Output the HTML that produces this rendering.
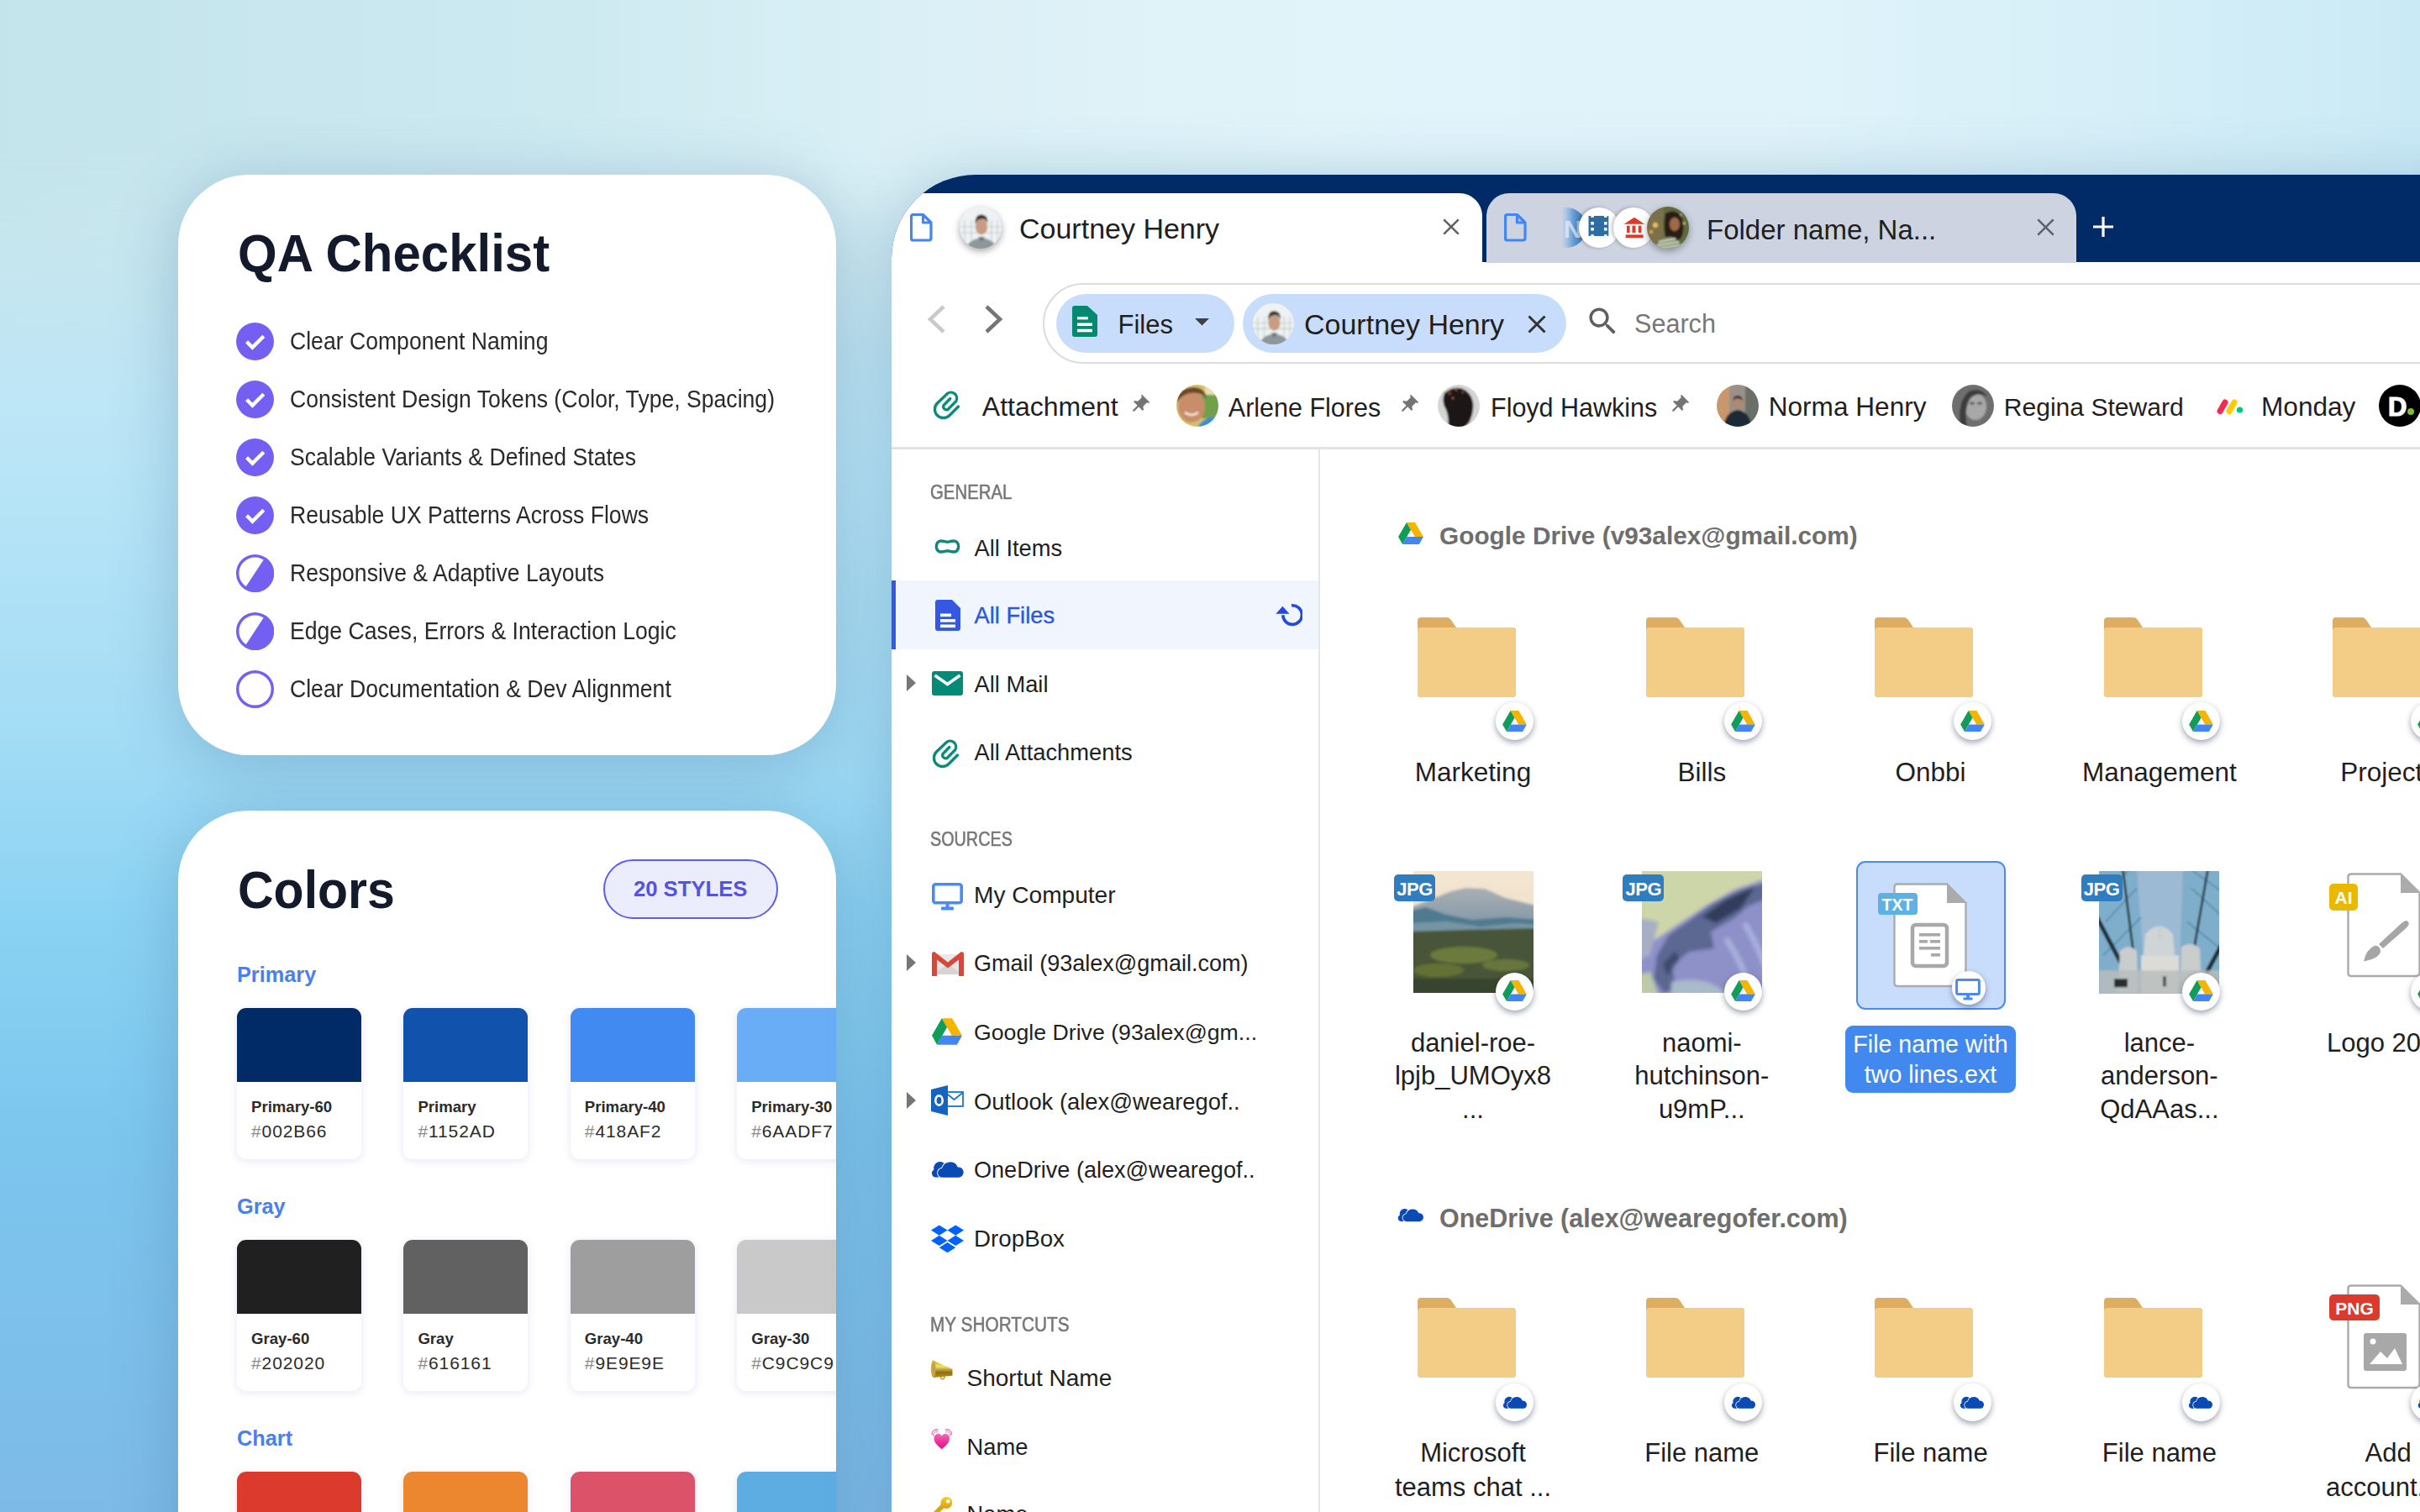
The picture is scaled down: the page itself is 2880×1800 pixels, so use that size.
<!DOCTYPE html>
<html><head><meta charset="utf-8">
<style>
html,body{margin:0;padding:0;}
body{width:2880px;height:1800px;overflow:hidden;position:relative;font-family:"Liberation Sans",sans-serif;}
.t{position:absolute;white-space:nowrap;}
</style></head><body>
<div style="position:absolute;left:0;top:0;width:2880px;height:1800px;background:
linear-gradient(180deg, #C6E5EC 0px, #CAE8F0 250px, #B9E5F7 550px, #A5DDF5 850px, #8AD2F3 1100px, #7CC6EE 1350px, #7DBAE8 1800px);"></div>
<div style="position:absolute;left:0;top:0;width:2880px;height:420px;background:linear-gradient(90deg,#C3E4EB 0px,#CBE9F0 600px,#DBF0F6 1100px,#E1F4FA 1600px,#E0F3FA 2100px,#D6EFF8 2500px,#CAEAF6 2880px);-webkit-mask-image:linear-gradient(180deg,#000 0px,#000 180px,transparent 420px);mask-image:linear-gradient(180deg,#000 0px,#000 180px,transparent 420px);"></div>
<div style="position:absolute;left:212.0px;top:208.0px;width:783.0px;height:691.0px;background:#fff;border-radius:84px;box-shadow:0 12px 70px 6px rgba(70,115,155,0.30);"></div>
<div class="t" style="left:283.0px;top:273.2px;font-size:60px;line-height:60px;color:#131A2B;font-weight:700;transform:scaleY(1.06);transform-origin:0 50.80px;">QA Checklist</div>
<svg style="position:absolute;left:281.0px;top:383.5px;" width="45" height="45" viewBox="0 0 45 45"><circle cx="22.5" cy="22.5" r="22.5" fill="#7360F2"/><path d="M12.6 22.8 L19.4 29.6 L32.8 16.2" fill="none" stroke="#fff" stroke-width="4.3" stroke-linecap="butt" stroke-linejoin="miter"/></svg>
<div class="t" style="left:345.0px;top:393.9px;font-size:26.6px;line-height:26.6px;color:#2A2A2A;font-weight:400;transform:scaleY(1.08);transform-origin:0 22.52px;">Clear Component Naming</div>
<svg style="position:absolute;left:281.0px;top:452.5px;" width="45" height="45" viewBox="0 0 45 45"><circle cx="22.5" cy="22.5" r="22.5" fill="#7360F2"/><path d="M12.6 22.8 L19.4 29.6 L32.8 16.2" fill="none" stroke="#fff" stroke-width="4.3" stroke-linecap="butt" stroke-linejoin="miter"/></svg>
<div class="t" style="left:345.0px;top:462.9px;font-size:26.6px;line-height:26.6px;color:#2A2A2A;font-weight:400;transform:scaleY(1.08);transform-origin:0 22.52px;">Consistent Design Tokens (Color, Type, Spacing)</div>
<svg style="position:absolute;left:281.0px;top:521.5px;" width="45" height="45" viewBox="0 0 45 45"><circle cx="22.5" cy="22.5" r="22.5" fill="#7360F2"/><path d="M12.6 22.8 L19.4 29.6 L32.8 16.2" fill="none" stroke="#fff" stroke-width="4.3" stroke-linecap="butt" stroke-linejoin="miter"/></svg>
<div class="t" style="left:345.0px;top:531.9px;font-size:26.6px;line-height:26.6px;color:#2A2A2A;font-weight:400;transform:scaleY(1.08);transform-origin:0 22.52px;">Scalable Variants &amp; Defined States</div>
<svg style="position:absolute;left:281.0px;top:590.5px;" width="45" height="45" viewBox="0 0 45 45"><circle cx="22.5" cy="22.5" r="22.5" fill="#7360F2"/><path d="M12.6 22.8 L19.4 29.6 L32.8 16.2" fill="none" stroke="#fff" stroke-width="4.3" stroke-linecap="butt" stroke-linejoin="miter"/></svg>
<div class="t" style="left:345.0px;top:600.9px;font-size:26.6px;line-height:26.6px;color:#2A2A2A;font-weight:400;transform:scaleY(1.08);transform-origin:0 22.52px;">Reusable UX Patterns Across Flows</div>
<svg style="position:absolute;left:281.0px;top:659.5px;" width="45" height="45" viewBox="0 0 45 45"><path d="M34.6 3.5 A22.5 22.5 0 1 1 9.9 41.1 Z" fill="#7360F2"/><circle cx="22.5" cy="22.5" r="20.8" fill="none" stroke="#7360F2" stroke-width="3.4"/></svg>
<div class="t" style="left:345.0px;top:669.9px;font-size:26.6px;line-height:26.6px;color:#2A2A2A;font-weight:400;transform:scaleY(1.08);transform-origin:0 22.52px;">Responsive &amp; Adaptive Layouts</div>
<svg style="position:absolute;left:281.0px;top:728.5px;" width="45" height="45" viewBox="0 0 45 45"><path d="M34.6 3.5 A22.5 22.5 0 1 1 9.9 41.1 Z" fill="#7360F2"/><circle cx="22.5" cy="22.5" r="20.8" fill="none" stroke="#7360F2" stroke-width="3.4"/></svg>
<div class="t" style="left:345.0px;top:738.9px;font-size:26.6px;line-height:26.6px;color:#2A2A2A;font-weight:400;transform:scaleY(1.08);transform-origin:0 22.52px;">Edge Cases, Errors &amp; Interaction Logic</div>
<svg style="position:absolute;left:281.0px;top:797.5px;" width="45" height="45" viewBox="0 0 45 45"><circle cx="22.5" cy="22.5" r="20.8" fill="#fff" stroke="#7360F2" stroke-width="3.4"/></svg>
<div class="t" style="left:345.0px;top:807.9px;font-size:26.6px;line-height:26.6px;color:#2A2A2A;font-weight:400;transform:scaleY(1.08);transform-origin:0 22.52px;">Clear Documentation &amp; Dev Alignment</div>
<div style="position:absolute;left:212.0px;top:965.0px;width:783.0px;height:1000.0px;background:#fff;border-radius:84px;box-shadow:0 12px 70px 6px rgba(70,115,155,0.30);"></div>
<div class="t" style="left:283.0px;top:1031.6px;font-size:59px;line-height:59px;color:#131A2B;font-weight:700;transform:scaleY(1.06);transform-origin:0 49.96px;">Colors</div>
<div style="position:absolute;left:718.0px;top:1023.0px;width:207.5px;height:71.0px;box-sizing:border-box;border:2px solid #5B5EE6;background:#ECEDFC;border-radius:36px;"></div>
<div class="t" style="left:721.7px;width:200px;text-align:center;top:1045.7px;font-size:25.7px;line-height:25.7px;color:#5552E0;font-weight:700;">20 STYLES</div>
<div style="position:absolute;left:212px;top:965px;width:783px;height:835px;overflow:hidden;border-radius:84px 84px 0 0;">
<div class="t" style="left:70.0px;top:182.6px;font-size:25.3px;line-height:25.3px;color:#4A7FF2;font-weight:700;">Primary</div>
<div style="position:absolute;left:70.0px;top:235.0px;width:148.0px;height:180.0px;background:#fff;border-radius:11px;box-shadow:0 2px 8px 1px rgba(90,100,200,0.13);overflow:hidden;"></div>
<div style="position:absolute;left:70.0px;top:235.0px;width:148.0px;height:88.0px;background:#002B66;border-radius:11px 11px 0 0;"></div>
<div class="t" style="left:87.0px;top:343.9px;font-size:18.6px;line-height:18.6px;color:#2B2B2B;font-weight:700;">Primary-60</div>
<div class="t" style="left:87.0px;top:371.2px;font-size:21px;line-height:21px;color:#2B2B2B;font-weight:400;letter-spacing:0.9px;"><span style="color:#8A8A8A">#</span>002B66</div>
<div style="position:absolute;left:268.4px;top:235.0px;width:148.0px;height:180.0px;background:#fff;border-radius:11px;box-shadow:0 2px 8px 1px rgba(90,100,200,0.13);overflow:hidden;"></div>
<div style="position:absolute;left:268.4px;top:235.0px;width:148.0px;height:88.0px;background:#1152AD;border-radius:11px 11px 0 0;"></div>
<div class="t" style="left:285.4px;top:343.9px;font-size:18.6px;line-height:18.6px;color:#2B2B2B;font-weight:700;">Primary</div>
<div class="t" style="left:285.4px;top:371.2px;font-size:21px;line-height:21px;color:#2B2B2B;font-weight:400;letter-spacing:0.9px;"><span style="color:#8A8A8A">#</span>1152AD</div>
<div style="position:absolute;left:466.8px;top:235.0px;width:148.0px;height:180.0px;background:#fff;border-radius:11px;box-shadow:0 2px 8px 1px rgba(90,100,200,0.13);overflow:hidden;"></div>
<div style="position:absolute;left:466.8px;top:235.0px;width:148.0px;height:88.0px;background:#418AF2;border-radius:11px 11px 0 0;"></div>
<div class="t" style="left:483.8px;top:343.9px;font-size:18.6px;line-height:18.6px;color:#2B2B2B;font-weight:700;">Primary-40</div>
<div class="t" style="left:483.8px;top:371.2px;font-size:21px;line-height:21px;color:#2B2B2B;font-weight:400;letter-spacing:0.9px;"><span style="color:#8A8A8A">#</span>418AF2</div>
<div style="position:absolute;left:665.2px;top:235.0px;width:148.0px;height:180.0px;background:#fff;border-radius:11px;box-shadow:0 2px 8px 1px rgba(90,100,200,0.13);overflow:hidden;"></div>
<div style="position:absolute;left:665.2px;top:235.0px;width:148.0px;height:88.0px;background:#6AADF7;border-radius:11px 11px 0 0;"></div>
<div class="t" style="left:682.2px;top:343.9px;font-size:18.6px;line-height:18.6px;color:#2B2B2B;font-weight:700;">Primary-30</div>
<div class="t" style="left:682.2px;top:371.2px;font-size:21px;line-height:21px;color:#2B2B2B;font-weight:400;letter-spacing:0.9px;"><span style="color:#8A8A8A">#</span>6AADF7</div>
<div class="t" style="left:70.0px;top:458.6px;font-size:25.3px;line-height:25.3px;color:#4A7FF2;font-weight:700;">Gray</div>
<div style="position:absolute;left:70.0px;top:511.0px;width:148.0px;height:180.0px;background:#fff;border-radius:11px;box-shadow:0 2px 8px 1px rgba(90,100,200,0.13);overflow:hidden;"></div>
<div style="position:absolute;left:70.0px;top:511.0px;width:148.0px;height:88.0px;background:#202020;border-radius:11px 11px 0 0;"></div>
<div class="t" style="left:87.0px;top:619.9px;font-size:18.6px;line-height:18.6px;color:#2B2B2B;font-weight:700;">Gray-60</div>
<div class="t" style="left:87.0px;top:647.2px;font-size:21px;line-height:21px;color:#2B2B2B;font-weight:400;letter-spacing:0.9px;"><span style="color:#8A8A8A">#</span>202020</div>
<div style="position:absolute;left:268.4px;top:511.0px;width:148.0px;height:180.0px;background:#fff;border-radius:11px;box-shadow:0 2px 8px 1px rgba(90,100,200,0.13);overflow:hidden;"></div>
<div style="position:absolute;left:268.4px;top:511.0px;width:148.0px;height:88.0px;background:#616161;border-radius:11px 11px 0 0;"></div>
<div class="t" style="left:285.4px;top:619.9px;font-size:18.6px;line-height:18.6px;color:#2B2B2B;font-weight:700;">Gray</div>
<div class="t" style="left:285.4px;top:647.2px;font-size:21px;line-height:21px;color:#2B2B2B;font-weight:400;letter-spacing:0.9px;"><span style="color:#8A8A8A">#</span>616161</div>
<div style="position:absolute;left:466.8px;top:511.0px;width:148.0px;height:180.0px;background:#fff;border-radius:11px;box-shadow:0 2px 8px 1px rgba(90,100,200,0.13);overflow:hidden;"></div>
<div style="position:absolute;left:466.8px;top:511.0px;width:148.0px;height:88.0px;background:#9E9E9E;border-radius:11px 11px 0 0;"></div>
<div class="t" style="left:483.8px;top:619.9px;font-size:18.6px;line-height:18.6px;color:#2B2B2B;font-weight:700;">Gray-40</div>
<div class="t" style="left:483.8px;top:647.2px;font-size:21px;line-height:21px;color:#2B2B2B;font-weight:400;letter-spacing:0.9px;"><span style="color:#8A8A8A">#</span>9E9E9E</div>
<div style="position:absolute;left:665.2px;top:511.0px;width:148.0px;height:180.0px;background:#fff;border-radius:11px;box-shadow:0 2px 8px 1px rgba(90,100,200,0.13);overflow:hidden;"></div>
<div style="position:absolute;left:665.2px;top:511.0px;width:148.0px;height:88.0px;background:#C9C9C9;border-radius:11px 11px 0 0;"></div>
<div class="t" style="left:682.2px;top:619.9px;font-size:18.6px;line-height:18.6px;color:#2B2B2B;font-weight:700;">Gray-30</div>
<div class="t" style="left:682.2px;top:647.2px;font-size:21px;line-height:21px;color:#2B2B2B;font-weight:400;letter-spacing:0.9px;"><span style="color:#8A8A8A">#</span>C9C9C9</div>
<div class="t" style="left:70.0px;top:734.6px;font-size:25.3px;line-height:25.3px;color:#4A7FF2;font-weight:700;">Chart</div>
<div style="position:absolute;left:70.0px;top:787.0px;width:148.0px;height:180.0px;background:#fff;border-radius:11px;box-shadow:0 2px 8px 1px rgba(90,100,200,0.13);overflow:hidden;"></div>
<div style="position:absolute;left:70.0px;top:787.0px;width:148.0px;height:88.0px;background:#DC3A2C;border-radius:11px 11px 0 0;"></div>
<div class="t" style="left:87.0px;top:895.9px;font-size:18.6px;line-height:18.6px;color:#2B2B2B;font-weight:700;">Chart-1</div>
<div class="t" style="left:87.0px;top:923.2px;font-size:21px;line-height:21px;color:#2B2B2B;font-weight:400;letter-spacing:0.9px;"><span style="color:#8A8A8A">#</span>DC3A2C</div>
<div style="position:absolute;left:268.4px;top:787.0px;width:148.0px;height:180.0px;background:#fff;border-radius:11px;box-shadow:0 2px 8px 1px rgba(90,100,200,0.13);overflow:hidden;"></div>
<div style="position:absolute;left:268.4px;top:787.0px;width:148.0px;height:88.0px;background:#EC862F;border-radius:11px 11px 0 0;"></div>
<div class="t" style="left:285.4px;top:895.9px;font-size:18.6px;line-height:18.6px;color:#2B2B2B;font-weight:700;">Chart-2</div>
<div class="t" style="left:285.4px;top:923.2px;font-size:21px;line-height:21px;color:#2B2B2B;font-weight:400;letter-spacing:0.9px;"><span style="color:#8A8A8A">#</span>EC862F</div>
<div style="position:absolute;left:466.8px;top:787.0px;width:148.0px;height:180.0px;background:#fff;border-radius:11px;box-shadow:0 2px 8px 1px rgba(90,100,200,0.13);overflow:hidden;"></div>
<div style="position:absolute;left:466.8px;top:787.0px;width:148.0px;height:88.0px;background:#DB5269;border-radius:11px 11px 0 0;"></div>
<div class="t" style="left:483.8px;top:895.9px;font-size:18.6px;line-height:18.6px;color:#2B2B2B;font-weight:700;">Chart-3</div>
<div class="t" style="left:483.8px;top:923.2px;font-size:21px;line-height:21px;color:#2B2B2B;font-weight:400;letter-spacing:0.9px;"><span style="color:#8A8A8A">#</span>DB5269</div>
<div style="position:absolute;left:665.2px;top:787.0px;width:148.0px;height:180.0px;background:#fff;border-radius:11px;box-shadow:0 2px 8px 1px rgba(90,100,200,0.13);overflow:hidden;"></div>
<div style="position:absolute;left:665.2px;top:787.0px;width:148.0px;height:88.0px;background:#5DADE2;border-radius:11px 11px 0 0;"></div>
<div class="t" style="left:682.2px;top:895.9px;font-size:18.6px;line-height:18.6px;color:#2B2B2B;font-weight:700;">Chart-4</div>
<div class="t" style="left:682.2px;top:923.2px;font-size:21px;line-height:21px;color:#2B2B2B;font-weight:400;letter-spacing:0.9px;"><span style="color:#8A8A8A">#</span>5DADE2</div>
</div>
<div style="position:absolute;left:1061px;top:208px;width:1900px;height:1700px;border-radius:100px 0 0 0;box-shadow:0 10px 70px 6px rgba(70,115,155,0.30);background:#002B66;"></div>
<div style="position:absolute;left:1061px;top:208px;width:1900px;height:1700px;border-radius:100px 0 0 0;overflow:hidden;"><div style="position:absolute;left:-1061px;top:-208px;width:2880px;height:1800px;">
<div style="position:absolute;left:1061.0px;top:312.0px;width:1820.0px;height:1490.0px;background:#fff;"></div>
<div style="position:absolute;left:1061.0px;top:230.0px;width:703.0px;height:90.0px;background:#fff;border-radius:0 27px 0 0;"></div>
<div style="position:absolute;left:1769.0px;top:230.0px;width:702.0px;height:83.0px;background:#CDD3E0;border-radius:27px 27px 0 0;"></div>
<svg style="position:absolute;left:1083.0px;top:254.0px;" width="27" height="34" viewBox="0 0 27 34"><path d="M3.5 1.5 H15.5 L25 11 V29.5 Q25 32 22.5 32 H4 Q1.5 32 1.5 29.5 V4 Q1.5 1.5 4 1.5 Z M15.5 1.5 V11 H25" fill="none" stroke="#4285F4" stroke-width="3.2" stroke-linejoin="round"/></svg>
<svg style="position:absolute;left:1141.5px;top:246.0px;filter:drop-shadow(0 3px 4px rgba(0,0,0,0.35));" width="50" height="50" viewBox="0 0 50 50"><defs><clipPath id="avc1"><circle cx="25" cy="25" r="25"/></clipPath><filter id="avf1" x="-20%" y="-20%" width="140%" height="140%"><feGaussianBlur stdDeviation="0.9"/></filter></defs><g clip-path="url(#avc1)"><g filter="url(#avf1)"><rect x="-5" y="-5" width="60" height="60" fill="#EEF2F3"/><path d="M0 24 H50 M0 31 H50 M6 16 V42 M14 16 V42 M38 16 V42 M45 16 V42" stroke="#C2CACD" stroke-width="1.1"/><path d="M6 54 Q9 39 26 37 Q43 39 46 54 Z" fill="#8E979C"/><path d="M22 36 L26 42 L30 36 Z" fill="#6E767A"/><ellipse cx="26" cy="24" rx="7.2" ry="9.5" fill="#C89C84"/><path d="M18.5 21 Q18 9 26 9.5 Q34 9.5 33.5 20 Q31 14 26 14.5 Q21 14.5 18.5 21 Z" fill="#3A3029"/></g></g></svg>
<div class="t" style="left:1213.0px;top:254.8px;font-size:34px;line-height:34px;color:#1F1F1F;font-weight:400;">Courtney Henry</div>
<svg style="position:absolute;left:1717.0px;top:260.0px;" width="20" height="20" viewBox="0 0 20 20"><path d="M1.3 1.3 L18.7 18.7 M18.7 1.3 L1.3 18.7" stroke="#5F6368" stroke-width="2.6" stroke-linecap="butt"/></svg>
<svg style="position:absolute;left:1790.0px;top:254.0px;" width="27" height="34" viewBox="0 0 27 34"><path d="M3.5 1.5 H15.5 L25 11 V29.5 Q25 32 22.5 32 H4 Q1.5 32 1.5 29.5 V4 Q1.5 1.5 4 1.5 Z M15.5 1.5 V11 H25" fill="none" stroke="#4285F4" stroke-width="3.2" stroke-linejoin="round"/></svg>
<div style="position:absolute;left:1840px;top:247px;width:48px;height:48px;border-radius:50%;background:linear-gradient(90deg,rgba(205,211,224,0) 0%,rgba(205,211,224,0) 38%,#a9c6e6 50%,#5f98cf 70%,#2f6fb3 100%);"></div>
<div class="t" style="left:1861.0px;top:257.6px;font-size:30px;line-height:30px;color:rgba(235,240,248,0.7);font-weight:700;">N</div>
<div style="position:absolute;left:1879px;top:247px;width:48px;height:48px;border-radius:50%;background:#fff;box-shadow:-2px 0 4px rgba(0,0,0,0.25);"></div>
<svg style="position:absolute;left:1880.0px;top:250.0px;" width="40" height="40" viewBox="1880 250 40 40"><path d="M1890.5 257 H1914.3 V281 H1890.5 Z" fill="#2D6DA3"/><g fill="#fff"><rect x="1893.3" y="264" width="3.5" height="3.6"/><rect x="1909" y="264" width="3.5" height="3.6"/><rect x="1893.3" y="271" width="3.5" height="3.6"/><rect x="1909" y="271" width="3.5" height="3.6"/><rect x="1893.3" y="257" width="3.5" height="1.8"/><rect x="1909" y="257" width="3.5" height="1.8"/><rect x="1893.3" y="279.2" width="3.5" height="1.8"/><rect x="1909" y="279.2" width="3.5" height="1.8"/></g></svg>
<div style="position:absolute;left:1920px;top:247px;width:48px;height:48px;border-radius:50%;background:#fff;box-shadow:-2px 0 4px rgba(0,0,0,0.25);"></div>
<svg style="position:absolute;left:1925.0px;top:250.0px;" width="40" height="40" viewBox="1925 250 40 40"><g fill="#DD3A2A"><path d="M1932.6 266.7 H1957 L1945 258.8 Z"/><rect x="1936" y="268.7" width="3.6" height="8.3"/><rect x="1942.5" y="268.7" width="4" height="8.3"/><rect x="1949.7" y="268.7" width="3.6" height="8.3"/><rect x="1934.6" y="279.4" width="21" height="3.8"/></g></svg>
<svg style="position:absolute;left:1960.0px;top:246.0px;filter:drop-shadow(0 3px 4px rgba(0,0,0,0.35));" width="50" height="50" viewBox="0 0 50 50"><defs><clipPath id="avc2"><circle cx="25" cy="25" r="25"/></clipPath><filter id="avf2" x="-20%" y="-20%" width="140%" height="140%"><feGaussianBlur stdDeviation="0.9"/></filter></defs><g clip-path="url(#avc2)"><g filter="url(#avf2)"><rect x="-5" y="-5" width="60" height="60" fill="#5E6A3E"/><rect x="-5" y="-5" width="25" height="60" fill="#7A7048"/><circle cx="10" cy="22" r="3" fill="#F0C060"/><circle cx="5" cy="30" r="2" fill="#E8B050"/><circle cx="44" cy="20" r="1.5" fill="#F0E0A0"/><circle cx="40" cy="10" r="1.6" fill="#E8E0B0"/><path d="M22 8 Q32 2 40 10 Q46 20 42 34 Q40 40 36 40 L24 40 Q18 28 22 8 Z" fill="#2A1E16"/><ellipse cx="33" cy="21" rx="6" ry="8" fill="#A06A48"/><path d="M8 52 Q14 36 28 36 Q40 38 42 52 Z" fill="#7E8E66"/><path d="M14 42 L34 38 M12 46 L38 42 M10 50 L40 46" stroke="#E4E8D8" stroke-width="1.6"/></g></g></svg>
<div class="t" style="left:2031.0px;top:257.0px;font-size:33px;line-height:33px;color:#1F1F1F;font-weight:400;">Folder name, Na...</div>
<svg style="position:absolute;left:2424.0px;top:260.0px;" width="21" height="21" viewBox="0 0 21 21"><path d="M1.3 1.3 L19.7 19.7 M19.7 1.3 L1.3 19.7" stroke="#5F6368" stroke-width="2.6" stroke-linecap="butt"/></svg>
<svg style="position:absolute;left:2490.0px;top:257.0px;" width="26" height="26" viewBox="0 0 26 26"><path d="M13 1 V25 M1 13 H25" stroke="#fff" stroke-width="3.2"/></svg>
<svg style="position:absolute;left:1101.0px;top:362.0px;" width="26" height="36" viewBox="0 0 26 36"><path d="M22 3 L6 18 L22 33" fill="none" stroke="#C9C9C9" stroke-width="4.5"/></svg>
<svg style="position:absolute;left:1170.0px;top:362.0px;" width="26" height="36" viewBox="0 0 26 36"><path d="M4 3 L20 18 L4 33" fill="none" stroke="#757575" stroke-width="4.5"/></svg>
<div style="position:absolute;left:1241.0px;top:336.5px;width:1700.0px;height:96.5px;box-sizing:border-box;border:2.5px solid #DCDCDC;border-radius:48px;background:#fff;"></div>
<div style="position:absolute;left:1256.7px;top:350.0px;width:212.0px;height:70.0px;background:#C8DDFC;border-radius:35px;"></div>
<svg style="position:absolute;left:1276.0px;top:363.6px;" width="30" height="37" viewBox="0 0 30 37"><path d="M0 3 Q0 0 3 0 H18 L30 11 V34 Q30 37 27 37 H3 Q0 37 0 34 Z" fill="#03896F"/><rect x="6" y="13.1" width="12.8" height="3.3" fill="#fff"/><rect x="6" y="20.5" width="18" height="3.5" fill="#fff"/><rect x="6" y="27.8" width="18" height="3.5" fill="#fff"/></svg>
<div class="t" style="left:1330.5px;top:371.1px;font-size:31px;line-height:31px;color:#1F1F1F;font-weight:400;">Files</div>
<svg style="position:absolute;left:1421.5px;top:379.0px;" width="17" height="8.5" viewBox="0 0 17 8.5"><path d="M0 0 H17 L8.5 8.5 Z" fill="#404040"/></svg>
<div style="position:absolute;left:1479.0px;top:350.0px;width:385.0px;height:70.0px;background:#C8DDFC;border-radius:35px;"></div>
<svg style="position:absolute;left:1491.0px;top:360.5px;" width="49" height="49" viewBox="0 0 50 50"><defs><clipPath id="avc3"><circle cx="25" cy="25" r="25"/></clipPath><filter id="avf3" x="-20%" y="-20%" width="140%" height="140%"><feGaussianBlur stdDeviation="0.9"/></filter></defs><g clip-path="url(#avc3)"><g filter="url(#avf3)"><rect x="-5" y="-5" width="60" height="60" fill="#EEF2F3"/><path d="M0 24 H50 M0 31 H50 M6 16 V42 M14 16 V42 M38 16 V42 M45 16 V42" stroke="#C2CACD" stroke-width="1.1"/><path d="M6 54 Q9 39 26 37 Q43 39 46 54 Z" fill="#8E979C"/><path d="M22 36 L26 42 L30 36 Z" fill="#6E767A"/><ellipse cx="26" cy="24" rx="7.2" ry="9.5" fill="#C89C84"/><path d="M18.5 21 Q18 9 26 9.5 Q34 9.5 33.5 20 Q31 14 26 14.5 Q21 14.5 18.5 21 Z" fill="#3A3029"/></g></g></svg>
<div class="t" style="left:1552.0px;top:368.5px;font-size:34px;line-height:34px;color:#1F1F1F;font-weight:400;">Courtney Henry</div>
<svg style="position:absolute;left:1818.0px;top:375.0px;" width="22" height="22" viewBox="0 0 22 22"><path d="M1.5 1.5 L20.5 20.5 M20.5 1.5 L1.5 20.5" stroke="#333" stroke-width="3" stroke-linecap="butt"/></svg>
<svg style="position:absolute;left:1886.0px;top:360.5px;" width="43" height="43" viewBox="0 0 24 24"><path d="M15.5 14h-.79l-.28-.27C15.41 12.59 16 11.11 16 9.5 16 5.91 13.09 3 9.5 3S3 5.91 3 9.5 5.91 16 9.5 16c1.61 0 3.09-.59 4.23-1.57l.27.28v.79l5 4.99L20.49 19l-4.99-5zm-6 0C7.01 14 5 11.99 5 9.5S7.01 5 9.5 5 14 7.01 14 9.5 11.99 14 9.5 14z" fill="#5F5F5F"/></svg>
<div class="t" style="left:1945.0px;top:370.1px;font-size:30.6px;line-height:30.6px;color:#777777;font-weight:400;">Search</div>
<svg style="position:absolute;left:1099.0px;top:450.0px;" width="80" height="60" viewBox="0 0 80 60"><path d="M41.5 34 L31 44.5 A10.2 10.2 0 0 1 16.5 30 L28.5 18.5 A7 7 0 0 1 38.5 28 L29 37.5 A3.8 3.8 0 0 1 24 32.5 L31.8 24.5" fill="none" stroke="#068C78" stroke-width="3.3" stroke-linecap="round"/></svg>
<div class="t" style="left:1168.8px;top:468.3px;font-size:32px;line-height:32px;color:#1F1F1F;font-weight:400;">Attachment</div>
<svg style="position:absolute;left:1342.5px;top:468.5px;" width="26" height="26" viewBox="0 0 24 24"><path d="M16 9V4h1c.55 0 1-.45 1-1s-.45-1-1-1H7c-.55 0-1 .45-1 1s.45 1 1 1h1v5c0 1.66-1.34 3-3 3v2h5.97v7l1 1 1-1v-7H19v-2c-1.66 0-3-1.34-3-3z" fill="#747474" transform="rotate(45 12 12)"/></svg>
<svg style="position:absolute;left:1400.0px;top:458.0px;" width="50" height="50" viewBox="0 0 50 50"><defs><clipPath id="avc4"><circle cx="25" cy="25" r="25"/></clipPath><filter id="avf4" x="-20%" y="-20%" width="140%" height="140%"><feGaussianBlur stdDeviation="0.9"/></filter></defs><g clip-path="url(#avc4)"><g filter="url(#avf4)"><rect x="-5" y="-5" width="60" height="60" fill="#D8C06A"/><rect x="30" y="10" width="25" height="30" fill="#6FA048"/><rect x="34" y="0" width="20" height="12" fill="#E8DDB0"/><path d="M25 52 Q30 38 50 38 V52 Z" fill="#3A8FD0"/><ellipse cx="18" cy="26" rx="16" ry="19" fill="#C88E6A"/><path d="M0 14 Q8 2 22 3 Q34 4 36 16 Q28 8 16 10 Q6 12 0 22 Z" fill="#6A4A2A"/><path d="M10 33 Q18 39 26 33" stroke="#F4EDE6" stroke-width="2.5" fill="none"/></g></g></svg>
<div class="t" style="left:1461.8px;top:469.6px;font-size:30.5px;line-height:30.5px;color:#1F1F1F;font-weight:400;">Arlene Flores</div>
<svg style="position:absolute;left:1662.5px;top:468.5px;" width="26" height="26" viewBox="0 0 24 24"><path d="M16 9V4h1c.55 0 1-.45 1-1s-.45-1-1-1H7c-.55 0-1 .45-1 1s.45 1 1 1h1v5c0 1.66-1.34 3-3 3v2h5.97v7l1 1 1-1v-7H19v-2c-1.66 0-3-1.34-3-3z" fill="#747474" transform="rotate(45 12 12)"/></svg>
<svg style="position:absolute;left:1711.0px;top:458.0px;" width="50" height="50" viewBox="0 0 50 50"><defs><clipPath id="avc5"><circle cx="25" cy="25" r="25"/></clipPath><filter id="avf5" x="-20%" y="-20%" width="140%" height="140%"><feGaussianBlur stdDeviation="0.9"/></filter></defs><g clip-path="url(#avc5)"><g filter="url(#avf5)"><rect x="-5" y="-5" width="60" height="60" fill="#D5D5D5"/><path d="M8 10 Q20 0 32 6 Q44 14 42 30 Q40 46 30 52 L12 52 Q14 40 10 30 Q4 20 8 10 Z" fill="#1A1614"/><circle cx="14" cy="10" r="2" fill="#8A3A30"/><circle cx="22" cy="6" r="1.6" fill="#A05040"/><circle cx="30" cy="9" r="1.6" fill="#7A4A3A"/><circle cx="18" cy="16" r="1.4" fill="#9A6050"/></g></g></svg>
<div class="t" style="left:1774.0px;top:469.6px;font-size:30.5px;line-height:30.5px;color:#1F1F1F;font-weight:400;">Floyd Hawkins</div>
<svg style="position:absolute;left:1984.5px;top:468.5px;" width="26" height="26" viewBox="0 0 24 24"><path d="M16 9V4h1c.55 0 1-.45 1-1s-.45-1-1-1H7c-.55 0-1 .45-1 1s.45 1 1 1h1v5c0 1.66-1.34 3-3 3v2h5.97v7l1 1 1-1v-7H19v-2c-1.66 0-3-1.34-3-3z" fill="#747474" transform="rotate(45 12 12)"/></svg>
<svg style="position:absolute;left:2042.5px;top:458.0px;" width="50" height="50" viewBox="0 0 50 50"><defs><clipPath id="avc6"><circle cx="25" cy="25" r="25"/></clipPath><filter id="avf6" x="-20%" y="-20%" width="140%" height="140%"><feGaussianBlur stdDeviation="0.9"/></filter></defs><g clip-path="url(#avc6)"><g filter="url(#avf6)"><rect x="-5" y="-5" width="60" height="60" fill="#9A9088"/><rect x="-5" y="-5" width="20" height="60" fill="#C8986C"/><rect x="34" y="-5" width="20" height="60" fill="#6A7068"/><path d="M8 52 Q10 32 25 30 Q40 32 42 52 Z" fill="#1E2A36"/><ellipse cx="25" cy="22" rx="5.5" ry="7" fill="#B08870"/><path d="M19 19 Q20 13 25 13 Q30 13 31 19 Q28 16 25 16 Q22 16 19 19 Z" fill="#2A2420"/></g></g></svg>
<div class="t" style="left:2104.7px;top:468.6px;font-size:31.6px;line-height:31.6px;color:#1F1F1F;font-weight:400;">Norma Henry</div>
<svg style="position:absolute;left:2322.5px;top:458.0px;" width="50" height="50" viewBox="0 0 50 50"><defs><clipPath id="avc7"><circle cx="25" cy="25" r="25"/></clipPath><filter id="avf7" x="-20%" y="-20%" width="140%" height="140%"><feGaussianBlur stdDeviation="0.9"/></filter></defs><g clip-path="url(#avc7)"><g filter="url(#avf7)"><rect x="-5" y="-5" width="60" height="60" fill="#6E6E6E"/><ellipse cx="28" cy="26" rx="13" ry="16" fill="#A8A8A8"/><path d="M10 50 Q6 20 20 8 Q34 2 42 14 Q30 8 22 16 Q14 28 18 50 Z" fill="#3E3E3E"/><ellipse cx="24" cy="22" rx="3" ry="1.5" fill="#555"/><ellipse cx="33" cy="22" rx="3" ry="1.5" fill="#555"/></g></g></svg>
<div class="t" style="left:2384.7px;top:469.9px;font-size:30.1px;line-height:30.1px;color:#1F1F1F;font-weight:400;">Regina Steward</div>
<svg style="position:absolute;left:2637.0px;top:473.0px;" width="34" height="22" viewBox="0 0 34 22"><path d="M5 16.5 L11 6" stroke="#F62B54" stroke-width="7" stroke-linecap="round"/><path d="M16 16.5 L22 6" stroke="#FFCC00" stroke-width="7" stroke-linecap="round"/><circle cx="28.5" cy="15" r="3.6" fill="#00C875"/></svg>
<div class="t" style="left:2691.0px;top:468.6px;font-size:31.6px;line-height:31.6px;color:#1F1F1F;font-weight:400;">Monday</div>
<div style="position:absolute;left:2831.0px;top:458.0px;width:50.0px;height:50.0px;background:#000;border-radius:50%;"></div>
<div class="t" style="left:2842.0px;top:468.8px;font-size:31px;line-height:31px;color:#fff;font-weight:700;-webkit-text-stroke:1.2px #fff;">D</div>
<div style="position:absolute;left:2865.0px;top:486.0px;width:8.0px;height:8.0px;background:#7DBF2E;border-radius:50%;"></div>
<div style="position:absolute;left:1061.0px;top:532.0px;width:1820.0px;height:2.5px;background:#E3E3E3;"></div>
<div style="position:absolute;left:1568.5px;top:534.0px;width:2.5px;height:1300.0px;background:#E6E6E6;"></div>
<div class="t" style="left:1107.0px;top:576.7px;font-size:20.4px;line-height:20.4px;color:#767676;font-weight:400;transform:scaleY(1.2);transform-origin:0 17.27px;-webkit-text-stroke:0.45px #767676;">GENERAL</div>
<svg style="position:absolute;left:1100.0px;top:630.0px;" width="60" height="40" viewBox="1100 630 60 40"><path d="M1119.5 644.05 C1124 644.05 1126 645.3 1127.5 645.3 C1129 645.3 1131 644.05 1135.5 644.05 A5.2 6.45 0 0 1 1135.5 656.95 C1131 656.95 1129 655.7 1127.5 655.7 C1126 655.7 1124 656.95 1119.5 656.95 A5.2 6.45 0 0 1 1119.5 644.05 Z" fill="none" stroke="#068C78" stroke-width="3.4"/></svg>
<div class="t" style="left:1159.5px;top:638.6px;font-size:27.3px;line-height:27.3px;color:#1F1F1F;font-weight:400;">All Items</div>
<div style="position:absolute;left:1061.0px;top:691.0px;width:508.0px;height:82.0px;background:#F0F5FE;"></div>
<div style="position:absolute;left:1061.0px;top:691.0px;width:5.0px;height:82.0px;background:#3558E3;"></div>
<svg style="position:absolute;left:1113.0px;top:714.0px;" width="30" height="37" viewBox="0 0 30 37"><path d="M3 0 H20 L30 10 V34 Q30 37 27 37 H3 Q0 37 0 34 V3 Q0 0 3 0 Z" fill="#3558E3"/><rect x="6" y="16.5" width="13" height="3.6" fill="#fff"/><rect x="6" y="23" width="18" height="3.6" fill="#fff"/><rect x="6" y="29.5" width="18" height="3.6" fill="#fff"/></svg>
<div class="t" style="left:1159.5px;top:719.2px;font-size:27.3px;line-height:27.3px;color:#2D55E0;font-weight:400;-webkit-text-stroke:0.35px #2D55E0;">All Files</div>
<svg style="position:absolute;left:1510.0px;top:710.0px;" width="40" height="40" viewBox="1510 710 40 40"><path d="M1537 720.8 A11.3 11.3 0 1 1 1526.8 732.3" fill="none" stroke="#2448E0" stroke-width="3.6"/><path d="M1518.3 730.8 H1534.5 L1526.4 721.8 Z" fill="#2448E0"/></svg>
<svg style="position:absolute;left:1079.0px;top:803.0px;" width="11" height="20" viewBox="0 0 11 20"><path d="M0 0 L11 10 L0 20 Z" fill="#767676"/></svg>
<svg style="position:absolute;left:1109.0px;top:799.0px;" width="37" height="29" viewBox="0 0 37 29"><rect x="0" y="0" width="37" height="29" rx="3" fill="#038B77"/><path d="M3.5 5 L18.5 15.5 L33.5 5" fill="none" stroke="#fff" stroke-width="3.6"/></svg>
<div class="t" style="left:1159.5px;top:801.4px;font-size:27.3px;line-height:27.3px;color:#1F1F1F;font-weight:400;">All Mail</div>
<svg style="position:absolute;left:1098.0px;top:865.0px;" width="80" height="60" viewBox="0 0 80 60"><path d="M41.5 34 L31 44.5 A10.2 10.2 0 0 1 16.5 30 L28.5 18.5 A7 7 0 0 1 38.5 28 L29 37.5 A3.8 3.8 0 0 1 24 32.5 L31.8 24.5" fill="none" stroke="#068C78" stroke-width="3.3" stroke-linecap="round"/></svg>
<div class="t" style="left:1159.5px;top:881.9px;font-size:27.3px;line-height:27.3px;color:#1F1F1F;font-weight:400;">All Attachments</div>
<div class="t" style="left:1107.0px;top:991.4px;font-size:19.8px;line-height:19.8px;color:#767676;font-weight:400;transform:scaleY(1.2);transform-origin:0 16.76px;-webkit-text-stroke:0.45px #767676;">SOURCES</div>
<svg style="position:absolute;left:1109.0px;top:1051.0px;" width="37" height="33" viewBox="0 0 37 33"><rect x="1.8" y="1.8" width="33.4" height="22" rx="2.5" fill="none" stroke="#4A8AF4" stroke-width="3.6"/><rect x="16.5" y="24" width="4" height="5" fill="#4A8AF4"/><rect x="11" y="28.5" width="15" height="4" rx="1" fill="#4A8AF4"/></svg>
<div class="t" style="left:1159.0px;top:1052.2px;font-size:28.1px;line-height:28.1px;color:#1F1F1F;font-weight:400;">My Computer</div>
<svg style="position:absolute;left:1079.0px;top:1136.0px;" width="11" height="20" viewBox="0 0 11 20"><path d="M0 0 L11 10 L0 20 Z" fill="#767676"/></svg>
<svg style="position:absolute;left:1109.0px;top:1133.0px;" width="38" height="29" viewBox="0 0 38 29"><path d="M2 3 L36 3 L36 27 L2 27 Z" fill="#E8E8E8"/><path d="M2 27 L19 14 L36 27 Z" fill="#D5D5D5"/><path d="M0 3 Q0 0 3 0 L19 12.5 L35 0 Q38 0 38 3 V29 H32 V9.5 L19 19.5 L6 9.5 V29 H0 Z" fill="#D9463A"/></svg>
<div class="t" style="left:1159.0px;top:1134.1px;font-size:27.06px;line-height:27.06px;color:#1F1F1F;font-weight:400;">Gmail (93alex@gmail.com)</div>
<svg style="position:absolute;left:1109.0px;top:1212.0px;" width="36" height="32" viewBox="0 0 100 87"><path d="M33 0 L67 0 L100 57 L66 57 Z" fill="#F4B400"/><path d="M33 0 L50 29.5 L17 87 L0 57 Z" fill="#0F9D58"/><path d="M17 87 L83 87 L100 57 L34 57 Z" fill="#4285F4"/></svg>
<div class="t" style="left:1159.0px;top:1216.0px;font-size:26.7px;line-height:26.7px;color:#1F1F1F;font-weight:400;">Google Drive (93alex@gm...</div>
<svg style="position:absolute;left:1079.0px;top:1300.0px;" width="11" height="20" viewBox="0 0 11 20"><path d="M0 0 L11 10 L0 20 Z" fill="#767676"/></svg>
<svg style="position:absolute;left:1108.0px;top:1292.0px;" width="39" height="36" viewBox="0 0 39 36"><rect x="17" y="8" width="21" height="17" fill="#fff" stroke="#1976D2" stroke-width="1.8"/><path d="M17.5 9 L27.5 17 L37.5 9" fill="none" stroke="#1976D2" stroke-width="1.8"/><path d="M0 5 L20 0 V36 L0 31 Z" fill="#1565C0"/><ellipse cx="9.5" cy="18" rx="4.2" ry="5.6" fill="none" stroke="#fff" stroke-width="2.6"/></svg>
<div class="t" style="left:1159.0px;top:1297.5px;font-size:27.36px;line-height:27.36px;color:#1F1F1F;font-weight:400;">Outlook (alex@wearegof..</div>
<svg style="position:absolute;left:1108.0px;top:1378.0px;" width="40" height="26" viewBox="0 0 40 26"><path d="M5.5 23.5 A4.8 4.8 0 0 1 3.5 14.5 A7.5 7.5 0 0 1 18 10.5 L18 23.5 Z" fill="#0A4AB4"/><path d="M14 23.8 A5.5 5.5 0 0 1 13.2 12.8 A9.8 9.8 0 0 1 31.8 11.5 A6.1 6.1 0 0 1 33.2 23.8 Z" fill="#0A4AB4" stroke="#fff" stroke-width="2"/><rect x="10" y="23.8" width="26" height="2.2" fill="#fff"/><path d="M14 23.8 A5.5 5.5 0 0 1 13.2 12.8 A9.8 9.8 0 0 1 31.8 11.5 A6.1 6.1 0 0 1 33.2 23.8 Z" fill="#0A4AB4"/></svg>
<div class="t" style="left:1159.0px;top:1379.1px;font-size:27.09px;line-height:27.09px;color:#1F1F1F;font-weight:400;">OneDrive (alex@wearegof..</div>
<svg style="position:absolute;left:1108.0px;top:1458.0px;" width="39" height="34" viewBox="0 0 40 34"><path d="M10 0 L20 6.3 L10 12.6 L0 6.3 Z M30 0 L40 6.3 L30 12.6 L20 6.3 Z M0 19 L10 12.6 L20 19 L10 25.3 Z M20 19 L30 12.6 L40 19 L30 25.3 Z M10 27.4 L20 21 L30 27.4 L20 33.7 Z" fill="#0061FF"/></svg>
<div class="t" style="left:1159.0px;top:1460.5px;font-size:27.76px;line-height:27.76px;color:#1F1F1F;font-weight:400;">DropBox</div>
<div class="t" style="left:1107.0px;top:1568.1px;font-size:20.8px;line-height:20.8px;color:#767676;font-weight:400;transform:scaleY(1.18);transform-origin:0 17.61px;-webkit-text-stroke:0.45px #767676;">MY SHORTCUTS</div>
<svg style="position:absolute;left:1100.0px;top:1610.0px;" width="50" height="40" viewBox="1100 1610 50 40"><defs><linearGradient id="mgg" x1="0" y1="0" x2="0" y2="1"><stop offset="0" stop-color="#C9A21E"/><stop offset="0.35" stop-color="#F2E46A"/><stop offset="0.7" stop-color="#8E6E12"/><stop offset="1" stop-color="#B8901A"/></linearGradient></defs><circle cx="1121.7" cy="1639.6" r="2.2" fill="none" stroke="#C8A020" stroke-width="1.5"/><path d="M1110 1619.5 L1133.5 1629.8 L1133.5 1637.8 L1111 1640 Z" fill="url(#mgg)"/><ellipse cx="1110.8" cy="1629.8" rx="2.8" ry="10.2" fill="#D9A828"/><ellipse cx="1111.3" cy="1629.8" rx="1.4" ry="8" fill="#B8A060"/></svg>
<div class="t" style="left:1150.5px;top:1627.0px;font-size:28px;line-height:28px;color:#1F1F1F;font-weight:400;">Shortut Name</div>
<svg style="position:absolute;left:1100.0px;top:1695.0px;" width="40" height="35" viewBox="1100 1695 40 35"><defs><linearGradient id="hg" x1="0" y1="0" x2="0" y2="1"><stop offset="0" stop-color="#F76BBE"/><stop offset="0.6" stop-color="#EC2A97"/><stop offset="1" stop-color="#D81E86"/></linearGradient></defs><path d="M1120.8 1725.2 C1113 1719 1111.6 1716 1111.6 1712.3 C1111.6 1709 1114 1706.7 1116.6 1706.7 C1118.6 1706.7 1120 1708 1120.8 1709.5 C1121.6 1708 1123 1706.7 1125 1706.7 C1127.6 1706.7 1130 1709 1130 1712.3 C1130 1716 1128.6 1719 1120.8 1725.2 Z" fill="url(#hg)"/><g fill="none" stroke="#F26AB8" stroke-width="0.9"><path d="M1110.5 1709 A4 4 0 0 1 1116.5 1703.5"/><path d="M1109 1708 A5.8 5.8 0 0 1 1116.8 1701.8"/><path d="M1112 1709.6 A2.4 2.4 0 0 1 1116 1705.3"/><path d="M1131 1709 A4 4 0 0 0 1125 1703.5"/><path d="M1132.5 1708 A5.8 5.8 0 0 0 1124.7 1701.8"/><path d="M1129.5 1709.6 A2.4 2.4 0 0 0 1125.5 1705.3"/></g></svg>
<div class="t" style="left:1150.5px;top:1708.6px;font-size:27.3px;line-height:27.3px;color:#1F1F1F;font-weight:400;">Name</div>
<svg style="position:absolute;left:1100.0px;top:1775.0px;" width="40" height="25" viewBox="1100 1775 40 25"><defs><linearGradient id="kg" x1="0" y1="0" x2="0" y2="1"><stop offset="0" stop-color="#F5CC2A"/><stop offset="1" stop-color="#D9A010"/></linearGradient></defs><path d="M1121 1790 L1108 1803 L1113 1806 L1124.5 1794 Z" fill="#D9A514"/><circle cx="1126.3" cy="1789" r="6.9" fill="url(#kg)"/><circle cx="1128.3" cy="1787.2" r="2.3" fill="#fff"/></svg>
<div class="t" style="left:1150.5px;top:1789.4px;font-size:27.3px;line-height:27.3px;color:#1F1F1F;font-weight:400;">Name</div>
<svg style="position:absolute;left:1664.0px;top:622.0px;" width="30" height="26" viewBox="0 0 100 87"><path d="M33 0 L67 0 L100 57 L66 57 Z" fill="#F4B400"/><path d="M33 0 L50 29.5 L17 87 L0 57 Z" fill="#0F9D58"/><path d="M17 87 L83 87 L100 57 L34 57 Z" fill="#4285F4"/></svg>
<div class="t" style="left:1713.0px;top:623.4px;font-size:29.8px;line-height:29.8px;color:#6E6E6E;font-weight:700;">Google Drive (v93alex@gmail.com)</div>
<svg style="position:absolute;left:1686.7px;top:735.0px;" width="117" height="95" viewBox="0 0 117 95"><path d="M0 4 Q0 0 4 0 H35 Q38 0 40 3 L46 12 H113 Q117 12 117 16 V91 Q117 95 113 95 H4 Q0 95 0 91 Z" fill="#DDAE62"/><path d="M0 16 Q0 12 4 12 H113 Q117 12 117 16 V91 Q117 95 113 95 H4 Q0 95 0 91 Z" fill="#F3CC85"/></svg>
<div style="position:absolute;left:1780.0px;top:836.1px;width:45px;height:45px;border-radius:50%;background:#fff;box-shadow:0 3px 7px rgba(40,50,80,0.45);"></div><svg style="position:absolute;left:1788.0px;top:845.6px;" width="29" height="25" viewBox="0 0 100 87"><path d="M33 0 L67 0 L100 57 L66 57 Z" fill="#F4B400"/><path d="M33 0 L50 29.5 L17 87 L0 57 Z" fill="#0F9D58"/><path d="M17 87 L83 87 L100 57 L34 57 Z" fill="#4285F4"/></svg>
<div class="t" style="left:1623.0px;width:260px;text-align:center;top:904.2px;font-size:31.5px;line-height:31.5px;color:#1F1F1F;font-weight:400;">Marketing</div>
<svg style="position:absolute;left:1959.0px;top:735.0px;" width="117" height="95" viewBox="0 0 117 95"><path d="M0 4 Q0 0 4 0 H35 Q38 0 40 3 L46 12 H113 Q117 12 117 16 V91 Q117 95 113 95 H4 Q0 95 0 91 Z" fill="#DDAE62"/><path d="M0 16 Q0 12 4 12 H113 Q117 12 117 16 V91 Q117 95 113 95 H4 Q0 95 0 91 Z" fill="#F3CC85"/></svg>
<div style="position:absolute;left:2052.3px;top:836.1px;width:45px;height:45px;border-radius:50%;background:#fff;box-shadow:0 3px 7px rgba(40,50,80,0.45);"></div><svg style="position:absolute;left:2060.3px;top:845.6px;" width="29" height="25" viewBox="0 0 100 87"><path d="M33 0 L67 0 L100 57 L66 57 Z" fill="#F4B400"/><path d="M33 0 L50 29.5 L17 87 L0 57 Z" fill="#0F9D58"/><path d="M17 87 L83 87 L100 57 L34 57 Z" fill="#4285F4"/></svg>
<div class="t" style="left:1895.3px;width:260px;text-align:center;top:904.2px;font-size:31.5px;line-height:31.5px;color:#1F1F1F;font-weight:400;">Bills</div>
<svg style="position:absolute;left:2231.3px;top:735.0px;" width="117" height="95" viewBox="0 0 117 95"><path d="M0 4 Q0 0 4 0 H35 Q38 0 40 3 L46 12 H113 Q117 12 117 16 V91 Q117 95 113 95 H4 Q0 95 0 91 Z" fill="#DDAE62"/><path d="M0 16 Q0 12 4 12 H113 Q117 12 117 16 V91 Q117 95 113 95 H4 Q0 95 0 91 Z" fill="#F3CC85"/></svg>
<div style="position:absolute;left:2324.6px;top:836.1px;width:45px;height:45px;border-radius:50%;background:#fff;box-shadow:0 3px 7px rgba(40,50,80,0.45);"></div><svg style="position:absolute;left:2332.6px;top:845.6px;" width="29" height="25" viewBox="0 0 100 87"><path d="M33 0 L67 0 L100 57 L66 57 Z" fill="#F4B400"/><path d="M33 0 L50 29.5 L17 87 L0 57 Z" fill="#0F9D58"/><path d="M17 87 L83 87 L100 57 L34 57 Z" fill="#4285F4"/></svg>
<div class="t" style="left:2167.6px;width:260px;text-align:center;top:904.2px;font-size:31.5px;line-height:31.5px;color:#1F1F1F;font-weight:400;">Onbbi</div>
<svg style="position:absolute;left:2503.6px;top:735.0px;" width="117" height="95" viewBox="0 0 117 95"><path d="M0 4 Q0 0 4 0 H35 Q38 0 40 3 L46 12 H113 Q117 12 117 16 V91 Q117 95 113 95 H4 Q0 95 0 91 Z" fill="#DDAE62"/><path d="M0 16 Q0 12 4 12 H113 Q117 12 117 16 V91 Q117 95 113 95 H4 Q0 95 0 91 Z" fill="#F3CC85"/></svg>
<div style="position:absolute;left:2596.9px;top:836.1px;width:45px;height:45px;border-radius:50%;background:#fff;box-shadow:0 3px 7px rgba(40,50,80,0.45);"></div><svg style="position:absolute;left:2604.9px;top:845.6px;" width="29" height="25" viewBox="0 0 100 87"><path d="M33 0 L67 0 L100 57 L66 57 Z" fill="#F4B400"/><path d="M33 0 L50 29.5 L17 87 L0 57 Z" fill="#0F9D58"/><path d="M17 87 L83 87 L100 57 L34 57 Z" fill="#4285F4"/></svg>
<div class="t" style="left:2439.9px;width:260px;text-align:center;top:904.2px;font-size:31.5px;line-height:31.5px;color:#1F1F1F;font-weight:400;">Management</div>
<svg style="position:absolute;left:2775.9px;top:735.0px;" width="117" height="95" viewBox="0 0 117 95"><path d="M0 4 Q0 0 4 0 H35 Q38 0 40 3 L46 12 H113 Q117 12 117 16 V91 Q117 95 113 95 H4 Q0 95 0 91 Z" fill="#DDAE62"/><path d="M0 16 Q0 12 4 12 H113 Q117 12 117 16 V91 Q117 95 113 95 H4 Q0 95 0 91 Z" fill="#F3CC85"/></svg>
<div style="position:absolute;left:2869.2px;top:836.1px;width:45px;height:45px;border-radius:50%;background:#fff;box-shadow:0 3px 7px rgba(40,50,80,0.45);"></div><svg style="position:absolute;left:2877.2px;top:845.6px;" width="29" height="25" viewBox="0 0 100 87"><path d="M33 0 L67 0 L100 57 L66 57 Z" fill="#F4B400"/><path d="M33 0 L50 29.5 L17 87 L0 57 Z" fill="#0F9D58"/><path d="M17 87 L83 87 L100 57 L34 57 Z" fill="#4285F4"/></svg>
<div class="t" style="left:2712.2px;width:260px;text-align:center;top:904.2px;font-size:31.5px;line-height:31.5px;color:#1F1F1F;font-weight:400;">Projects</div>
<svg style="position:absolute;left:1681.5px;top:1037.0px;" width="143" height="145" viewBox="0 0 143 145"><defs><linearGradient id="msky" x1="0" y1="0" x2="0" y2="1"><stop offset="0" stop-color="#F4E6D2"/><stop offset="1" stop-color="#E9D6BE"/></linearGradient><linearGradient id="mmt" x1="0" y1="0" x2="0" y2="1"><stop offset="0" stop-color="#A9AFB3"/><stop offset="1" stop-color="#7E95A5"/></linearGradient><filter id="mbl"><feGaussianBlur stdDeviation="1.6"/></filter></defs><g filter="url(#mbl)"><rect x="-5" y="-5" width="153" height="160" fill="url(#msky)"/><path d="M-5 44 L25 32 L45 24 L62 20 L85 21 L110 32 L150 42 L150 70 L-5 70 Z" fill="url(#mmt)"/><path d="M-5 48 L15 43 L40 52 L70 58 L110 55 L150 58 L150 80 L-5 80 Z" fill="#4F7A90"/><path d="M-5 62 L40 60 L80 66 L120 62 L150 64 L150 85 L-5 85 Z" fill="#7F9CA8" opacity="0.8"/><path d="M-5 72 L60 70 L150 68 L150 150 L-5 150 Z" fill="#4A5538"/><ellipse cx="60" cy="100" rx="40" ry="10" fill="#7B8A3E" opacity="0.7"/><ellipse cx="30" cy="118" rx="30" ry="8" fill="#6F7E36" opacity="0.7"/><ellipse cx="110" cy="112" rx="28" ry="7" fill="#7D8C40" opacity="0.6"/><rect x="-5" y="128" width="153" height="25" fill="#2F3A28" opacity="0.6"/></g></svg>
<div style="position:absolute;left:1659.0px;top:1041.0px;width:49.0px;height:32.0px;background:#2F7DBE;border-radius:5px;"></div><div class="t" style="left:1653.5px;width:60px;text-align:center;top:1047.9px;font-size:22px;line-height:22px;color:#fff;font-weight:700;letter-spacing:-0.5px;">JPG</div>
<div style="position:absolute;left:1780.0px;top:1157.5px;width:45px;height:45px;border-radius:50%;background:#fff;box-shadow:0 3px 7px rgba(40,50,80,0.45);"></div><svg style="position:absolute;left:1788.0px;top:1167.0px;" width="29" height="25" viewBox="0 0 100 87"><path d="M33 0 L67 0 L100 57 L66 57 Z" fill="#F4B400"/><path d="M33 0 L50 29.5 L17 87 L0 57 Z" fill="#0F9D58"/><path d="M17 87 L83 87 L100 57 L34 57 Z" fill="#4285F4"/></svg>
<div class="t" style="left:1618.0px;width:270px;text-align:center;top:1225.8px;font-size:31px;line-height:31px;color:#1F1F1F;font-weight:400;">daniel-roe-</div><div class="t" style="left:1618.0px;width:270px;text-align:center;top:1265.4px;font-size:31px;line-height:31px;color:#1F1F1F;font-weight:400;">lpjb_UMOyx8</div><div class="t" style="left:1618.0px;width:270px;text-align:center;top:1305.0px;font-size:31px;line-height:31px;color:#1F1F1F;font-weight:400;">...</div>
<svg style="position:absolute;left:1953.8px;top:1037.0px;" width="143" height="145" viewBox="0 0 143 145"><defs><filter id="nbl" x="-10%" y="-10%" width="120%" height="120%"><feGaussianBlur stdDeviation="2.2"/></filter></defs><g filter="url(#nbl)"><rect x="-10" y="-10" width="163" height="165" fill="#8E90C8"/><path d="M-10 -10 L150 -10 L150 8 L110 22 L75 42 L45 62 L15 82 L-10 90 Z" fill="#CDD6A8"/><path d="M-10 55 L20 60 L10 100 L-10 110 Z" fill="#A7AEC6"/><path d="M148 14 L118 22 L85 38 L58 58 L32 76 L18 100 L14 128 L26 145 L40 140 L36 112 L56 96 L86 92 L82 72 L110 56 L126 42 L150 32 Z" fill="#46577A" opacity="0.7"/><path d="M135 18 L100 34 L72 54 L88 62 L118 44 Z" fill="#22304A" opacity="0.75"/><path d="M40 95 L25 110 L30 125 L45 105 Z" fill="#2A3A55" opacity="0.6"/><path d="M100 80 Q120 110 130 145 M122 62 Q140 92 150 122" stroke="#B8C6EA" stroke-width="7" fill="none" opacity="0.6"/><path d="M35 132 Q80 122 105 150 L35 155 Z" fill="#A9BACB"/><path d="M-10 125 L10 120 L20 150 L-10 150 Z" fill="#C9D8A0" opacity="0.8"/></g></svg>
<div style="position:absolute;left:1931.3px;top:1041.0px;width:49.0px;height:32.0px;background:#2F7DBE;border-radius:5px;"></div><div class="t" style="left:1925.8px;width:60px;text-align:center;top:1047.9px;font-size:22px;line-height:22px;color:#fff;font-weight:700;letter-spacing:-0.5px;">JPG</div>
<div style="position:absolute;left:2052.3px;top:1157.5px;width:45px;height:45px;border-radius:50%;background:#fff;box-shadow:0 3px 7px rgba(40,50,80,0.45);"></div><svg style="position:absolute;left:2060.3px;top:1167.0px;" width="29" height="25" viewBox="0 0 100 87"><path d="M33 0 L67 0 L100 57 L66 57 Z" fill="#F4B400"/><path d="M33 0 L50 29.5 L17 87 L0 57 Z" fill="#0F9D58"/><path d="M17 87 L83 87 L100 57 L34 57 Z" fill="#4285F4"/></svg>
<div class="t" style="left:1890.3px;width:270px;text-align:center;top:1225.8px;font-size:31px;line-height:31px;color:#1F1F1F;font-weight:400;">naomi-</div><div class="t" style="left:1890.3px;width:270px;text-align:center;top:1265.4px;font-size:31px;line-height:31px;color:#1F1F1F;font-weight:400;">hutchinson-</div><div class="t" style="left:1890.3px;width:270px;text-align:center;top:1305.0px;font-size:31px;line-height:31px;color:#1F1F1F;font-weight:400;">u9mP...</div>
<div style="position:absolute;left:2208.6px;top:1024.8px;width:178.0px;height:177.5px;box-sizing:border-box;background:#C8DDFC;border:2.5px solid #4A8AF4;border-radius:11px;"></div>
<svg style="position:absolute;left:2253.0px;top:1051.0px;" width="88" height="125" viewBox="0 0 88 125"><path d="M5 1.5 H64 L86.5 24 V119 Q86.5 123 82.5 123 H5 Q1.5 123 1.5 119 V5 Q1.5 1.5 5 1.5 Z" fill="#fff" stroke="#ABABAB" stroke-width="2.4"/><path d="M64 1.5 V24 H86.5 Z" fill="#ABABAB"/><rect x="23" y="50" width="41" height="49" rx="4" fill="none" stroke="#A8A8A8" stroke-width="4.5"/><g fill="#A8A8A8"><rect x="31" y="60" width="25" height="3.6"/><rect x="31" y="68" width="10" height="3.6"/><rect x="44" y="68" width="12" height="3.6"/><rect x="31" y="76" width="25" height="3.6"/><rect x="45" y="84" width="11" height="3.6"/></g></svg>
<div style="position:absolute;left:2235.0px;top:1063.0px;width:46.5px;height:26.0px;background:#5EB1E3;border-radius:4px;"></div>
<div class="t" style="left:2228.0px;width:60px;text-align:center;top:1067.5px;font-size:19.5px;line-height:19.5px;color:#fff;font-weight:700;">TXT</div>
<div style="position:absolute;left:2322.5px;top:1156.0px;width:40px;height:40px;border-radius:50%;background:#fff;box-shadow:0 3px 7px rgba(40,50,80,0.45);"></div><svg style="position:absolute;left:2327.0px;top:1165.0px;" width="30" height="27" viewBox="0 0 30 27"><rect x="1.6" y="1.6" width="26.8" height="17" rx="1.8" fill="none" stroke="#4A8AF4" stroke-width="3"/><rect x="13" y="19" width="4" height="4" fill="#4A8AF4"/><rect x="9.5" y="22.5" width="11" height="3" fill="#4A8AF4"/></svg>
<div style="position:absolute;left:2196.0px;top:1220.8px;width:202.7px;height:80.7px;background:#4289EF;border-radius:9px;"></div>
<div class="t" style="left:2187.5px;width:220px;text-align:center;top:1228.7px;font-size:28.6px;line-height:28.6px;color:#fff;font-weight:400;">File name with</div>
<div class="t" style="left:2187.5px;width:220px;text-align:center;top:1265.1px;font-size:28.6px;line-height:28.6px;color:#fff;font-weight:400;">two lines.ext</div>
<svg style="position:absolute;left:2498.4px;top:1037.0px;" width="143" height="145.6" viewBox="0 0 143 145"><defs><filter id="cbl"><feGaussianBlur stdDeviation="1.1"/></filter></defs><g filter="url(#cbl)"><rect x="-5" y="-5" width="153" height="160" fill="#9DBAD4"/><path d="M-5 -5 L45 -5 L55 145 L-5 145 Z" fill="#7FAECB"/><path d="M100 -5 L150 -5 L150 145 L95 145 Z" fill="#7FAECB"/><path d="M8 60 L45 20 M5 100 L50 55 M110 20 L148 55 M105 60 L148 95 M0 30 L40 -5 M105 -5 L148 25" stroke="#4F86A8" stroke-width="1.5"/><path d="M28 -5 L47 145" stroke="#1F2E3A" stroke-width="2.6"/><path d="M130 -5 L104 145" stroke="#1F2E3A" stroke-width="2.6"/><path d="M-5 50 L45 145" stroke="#1F2A33" stroke-width="5"/><path d="M150 80 L115 145" stroke="#1F2A33" stroke-width="5"/><path d="M55 75 Q72 55 88 75 L90 100 L53 100 Z" fill="#CFD4D6"/><rect x="71" y="66" width="2.5" height="14" fill="#C8CCCE"/><path d="M25 95 Q35 85 45 95 L47 145 L22 145 Z" fill="#C9CDCC"/><path d="M98 90 Q110 82 120 92 L122 145 L96 145 Z" fill="#C9CDCC"/><rect x="50" y="100" width="45" height="45" fill="#DCDCD6"/><rect x="0" y="118" width="143" height="30" fill="#B9BDBD" opacity="0.85"/><rect x="18" y="128" width="16" height="10" fill="#2A2F33"/><rect x="76" y="125" width="4" height="12" fill="#555"/></g></svg>
<div style="position:absolute;left:2476.5px;top:1041.0px;width:49.0px;height:32.0px;background:#2F7DBE;border-radius:5px;"></div><div class="t" style="left:2471.0px;width:60px;text-align:center;top:1047.9px;font-size:22px;line-height:22px;color:#fff;font-weight:700;letter-spacing:-0.5px;">JPG</div>
<div style="position:absolute;left:2596.9px;top:1157.5px;width:45px;height:45px;border-radius:50%;background:#fff;box-shadow:0 3px 7px rgba(40,50,80,0.45);"></div><svg style="position:absolute;left:2604.9px;top:1167.0px;" width="29" height="25" viewBox="0 0 100 87"><path d="M33 0 L67 0 L100 57 L66 57 Z" fill="#F4B400"/><path d="M33 0 L50 29.5 L17 87 L0 57 Z" fill="#0F9D58"/><path d="M17 87 L83 87 L100 57 L34 57 Z" fill="#4285F4"/></svg>
<div class="t" style="left:2434.9px;width:270px;text-align:center;top:1225.8px;font-size:31px;line-height:31px;color:#1F1F1F;font-weight:400;">lance-</div><div class="t" style="left:2434.9px;width:270px;text-align:center;top:1265.4px;font-size:31px;line-height:31px;color:#1F1F1F;font-weight:400;">anderson-</div><div class="t" style="left:2434.9px;width:270px;text-align:center;top:1305.0px;font-size:31px;line-height:31px;color:#1F1F1F;font-weight:400;">QdAAas...</div>
<svg style="position:absolute;left:2792.5px;top:1039.0px;" width="88" height="125" viewBox="0 0 88 125"><path d="M5 1.5 H64 L86.5 24 V119 Q86.5 123 82.5 123 H5 Q1.5 123 1.5 119 V5 Q1.5 1.5 5 1.5 Z" fill="#fff" stroke="#ABABAB" stroke-width="2.4"/><path d="M64 1.5 V24 H86.5 Z" fill="#ABABAB"/><path d="M72 57.5 Q76 60 71 65.5 L43 90 L38 85 L65 60 Q70 56 72 57.5 Z" fill="#A6A6A6"/><path d="M33.5 86.5 Q40 87 40 94 Q38 102 20 105.5 Q23 91 33.5 86.5 Z" fill="#A6A6A6"/></svg>
<div style="position:absolute;left:2772.0px;top:1052.0px;width:34.0px;height:32.0px;background:#E9B900;border-radius:5px;"></div>
<div class="t" style="left:2769.0px;width:40px;text-align:center;top:1058.2px;font-size:21px;line-height:21px;color:#fff;font-weight:700;">AI</div>
<div style="position:absolute;left:2869.2px;top:1157.5px;width:45px;height:45px;border-radius:50%;background:#fff;box-shadow:0 3px 7px rgba(40,50,80,0.45);"></div><svg style="position:absolute;left:2877.2px;top:1167.0px;" width="29" height="25" viewBox="0 0 100 87"><path d="M33 0 L67 0 L100 57 L66 57 Z" fill="#F4B400"/><path d="M33 0 L50 29.5 L17 87 L0 57 Z" fill="#0F9D58"/><path d="M17 87 L83 87 L100 57 L34 57 Z" fill="#4285F4"/></svg>
<div class="t" style="left:2712.2px;width:260px;text-align:center;top:1225.8px;font-size:31px;line-height:31px;color:#1F1F1F;font-weight:400;">Logo 2024</div>
<svg style="position:absolute;left:1663.0px;top:1435.0px;" width="32" height="21" viewBox="0 0 40 26"><path d="M5.5 23.5 A4.8 4.8 0 0 1 3.5 14.5 A7.5 7.5 0 0 1 18 10.5 L18 23.5 Z" fill="#0A4AB4"/><path d="M14 23.8 A5.5 5.5 0 0 1 13.2 12.8 A9.8 9.8 0 0 1 31.8 11.5 A6.1 6.1 0 0 1 33.2 23.8 Z" fill="#0A4AB4" stroke="#fff" stroke-width="2"/><rect x="10" y="23.8" width="26" height="2.2" fill="#fff"/><path d="M14 23.8 A5.5 5.5 0 0 1 13.2 12.8 A9.8 9.8 0 0 1 31.8 11.5 A6.1 6.1 0 0 1 33.2 23.8 Z" fill="#0A4AB4"/></svg>
<div class="t" style="left:1713.0px;top:1434.8px;font-size:30.5px;line-height:30.5px;color:#6E6E6E;font-weight:700;">OneDrive (alex@wearegofer.com)</div>
<svg style="position:absolute;left:1686.7px;top:1545.0px;" width="117" height="95" viewBox="0 0 117 95"><path d="M0 4 Q0 0 4 0 H35 Q38 0 40 3 L46 12 H113 Q117 12 117 16 V91 Q117 95 113 95 H4 Q0 95 0 91 Z" fill="#DDAE62"/><path d="M0 16 Q0 12 4 12 H113 Q117 12 117 16 V91 Q117 95 113 95 H4 Q0 95 0 91 Z" fill="#F3CC85"/></svg>
<div style="position:absolute;left:1780.0px;top:1646.5px;width:45px;height:45px;border-radius:50%;background:#fff;box-shadow:0 3px 7px rgba(40,50,80,0.45);"></div><svg style="position:absolute;left:1787.5px;top:1659.0px;" width="30" height="19.5" viewBox="0 0 40 26"><path d="M5.5 23.5 A4.8 4.8 0 0 1 3.5 14.5 A7.5 7.5 0 0 1 18 10.5 L18 23.5 Z" fill="#0A4AB4"/><path d="M14 23.8 A5.5 5.5 0 0 1 13.2 12.8 A9.8 9.8 0 0 1 31.8 11.5 A6.1 6.1 0 0 1 33.2 23.8 Z" fill="#0A4AB4" stroke="#fff" stroke-width="2"/><rect x="10" y="23.8" width="26" height="2.2" fill="#fff"/><path d="M14 23.8 A5.5 5.5 0 0 1 13.2 12.8 A9.8 9.8 0 0 1 31.8 11.5 A6.1 6.1 0 0 1 33.2 23.8 Z" fill="#0A4AB4"/></svg>
<div class="t" style="left:1618.0px;width:270px;text-align:center;top:1714.4px;font-size:31px;line-height:31px;color:#1F1F1F;font-weight:400;">Microsoft</div><div class="t" style="left:1618.0px;width:270px;text-align:center;top:1755.2px;font-size:31px;line-height:31px;color:#1F1F1F;font-weight:400;">teams chat ...</div>
<svg style="position:absolute;left:1959.0px;top:1545.0px;" width="117" height="95" viewBox="0 0 117 95"><path d="M0 4 Q0 0 4 0 H35 Q38 0 40 3 L46 12 H113 Q117 12 117 16 V91 Q117 95 113 95 H4 Q0 95 0 91 Z" fill="#DDAE62"/><path d="M0 16 Q0 12 4 12 H113 Q117 12 117 16 V91 Q117 95 113 95 H4 Q0 95 0 91 Z" fill="#F3CC85"/></svg>
<div style="position:absolute;left:2052.3px;top:1646.5px;width:45px;height:45px;border-radius:50%;background:#fff;box-shadow:0 3px 7px rgba(40,50,80,0.45);"></div><svg style="position:absolute;left:2059.8px;top:1659.0px;" width="30" height="19.5" viewBox="0 0 40 26"><path d="M5.5 23.5 A4.8 4.8 0 0 1 3.5 14.5 A7.5 7.5 0 0 1 18 10.5 L18 23.5 Z" fill="#0A4AB4"/><path d="M14 23.8 A5.5 5.5 0 0 1 13.2 12.8 A9.8 9.8 0 0 1 31.8 11.5 A6.1 6.1 0 0 1 33.2 23.8 Z" fill="#0A4AB4" stroke="#fff" stroke-width="2"/><rect x="10" y="23.8" width="26" height="2.2" fill="#fff"/><path d="M14 23.8 A5.5 5.5 0 0 1 13.2 12.8 A9.8 9.8 0 0 1 31.8 11.5 A6.1 6.1 0 0 1 33.2 23.8 Z" fill="#0A4AB4"/></svg>
<div class="t" style="left:1890.3px;width:270px;text-align:center;top:1714.4px;font-size:31px;line-height:31px;color:#1F1F1F;font-weight:400;">File name</div>
<svg style="position:absolute;left:2231.3px;top:1545.0px;" width="117" height="95" viewBox="0 0 117 95"><path d="M0 4 Q0 0 4 0 H35 Q38 0 40 3 L46 12 H113 Q117 12 117 16 V91 Q117 95 113 95 H4 Q0 95 0 91 Z" fill="#DDAE62"/><path d="M0 16 Q0 12 4 12 H113 Q117 12 117 16 V91 Q117 95 113 95 H4 Q0 95 0 91 Z" fill="#F3CC85"/></svg>
<div style="position:absolute;left:2324.6px;top:1646.5px;width:45px;height:45px;border-radius:50%;background:#fff;box-shadow:0 3px 7px rgba(40,50,80,0.45);"></div><svg style="position:absolute;left:2332.1px;top:1659.0px;" width="30" height="19.5" viewBox="0 0 40 26"><path d="M5.5 23.5 A4.8 4.8 0 0 1 3.5 14.5 A7.5 7.5 0 0 1 18 10.5 L18 23.5 Z" fill="#0A4AB4"/><path d="M14 23.8 A5.5 5.5 0 0 1 13.2 12.8 A9.8 9.8 0 0 1 31.8 11.5 A6.1 6.1 0 0 1 33.2 23.8 Z" fill="#0A4AB4" stroke="#fff" stroke-width="2"/><rect x="10" y="23.8" width="26" height="2.2" fill="#fff"/><path d="M14 23.8 A5.5 5.5 0 0 1 13.2 12.8 A9.8 9.8 0 0 1 31.8 11.5 A6.1 6.1 0 0 1 33.2 23.8 Z" fill="#0A4AB4"/></svg>
<div class="t" style="left:2162.6px;width:270px;text-align:center;top:1714.4px;font-size:31px;line-height:31px;color:#1F1F1F;font-weight:400;">File name</div>
<svg style="position:absolute;left:2503.6px;top:1545.0px;" width="117" height="95" viewBox="0 0 117 95"><path d="M0 4 Q0 0 4 0 H35 Q38 0 40 3 L46 12 H113 Q117 12 117 16 V91 Q117 95 113 95 H4 Q0 95 0 91 Z" fill="#DDAE62"/><path d="M0 16 Q0 12 4 12 H113 Q117 12 117 16 V91 Q117 95 113 95 H4 Q0 95 0 91 Z" fill="#F3CC85"/></svg>
<div style="position:absolute;left:2596.9px;top:1646.5px;width:45px;height:45px;border-radius:50%;background:#fff;box-shadow:0 3px 7px rgba(40,50,80,0.45);"></div><svg style="position:absolute;left:2604.4px;top:1659.0px;" width="30" height="19.5" viewBox="0 0 40 26"><path d="M5.5 23.5 A4.8 4.8 0 0 1 3.5 14.5 A7.5 7.5 0 0 1 18 10.5 L18 23.5 Z" fill="#0A4AB4"/><path d="M14 23.8 A5.5 5.5 0 0 1 13.2 12.8 A9.8 9.8 0 0 1 31.8 11.5 A6.1 6.1 0 0 1 33.2 23.8 Z" fill="#0A4AB4" stroke="#fff" stroke-width="2"/><rect x="10" y="23.8" width="26" height="2.2" fill="#fff"/><path d="M14 23.8 A5.5 5.5 0 0 1 13.2 12.8 A9.8 9.8 0 0 1 31.8 11.5 A6.1 6.1 0 0 1 33.2 23.8 Z" fill="#0A4AB4"/></svg>
<div class="t" style="left:2434.9px;width:270px;text-align:center;top:1714.4px;font-size:31px;line-height:31px;color:#1F1F1F;font-weight:400;">File name</div>
<svg style="position:absolute;left:2792.5px;top:1528.6px;" width="88" height="125" viewBox="0 0 88 125"><path d="M5 1.5 H64 L86.5 24 V119 Q86.5 123 82.5 123 H5 Q1.5 123 1.5 119 V5 Q1.5 1.5 5 1.5 Z" fill="#fff" stroke="#ABABAB" stroke-width="2.4"/><path d="M64 1.5 V24 H86.5 Z" fill="#ABABAB"/><rect x="20" y="58" width="51" height="45" rx="3" fill="#A8A8A8"/><circle cx="31" cy="68" r="3.5" fill="#fff"/><path d="M27 95 L40 80 L48 88 L57 76 L66 95 Z" fill="#fff"/></svg>
<div style="position:absolute;left:2772.0px;top:1541.0px;width:60.0px;height:31.0px;background:#DC3A2C;border-radius:5px;"></div>
<div class="t" style="left:2767.0px;width:70px;text-align:center;top:1547.2px;font-size:21px;line-height:21px;color:#fff;font-weight:700;">PNG</div>
<div style="position:absolute;left:2869.2px;top:1646.5px;width:45px;height:45px;border-radius:50%;background:#fff;box-shadow:0 3px 7px rgba(40,50,80,0.45);"></div><svg style="position:absolute;left:2876.7px;top:1659.0px;" width="30" height="19.5" viewBox="0 0 40 26"><path d="M5.5 23.5 A4.8 4.8 0 0 1 3.5 14.5 A7.5 7.5 0 0 1 18 10.5 L18 23.5 Z" fill="#0A4AB4"/><path d="M14 23.8 A5.5 5.5 0 0 1 13.2 12.8 A9.8 9.8 0 0 1 31.8 11.5 A6.1 6.1 0 0 1 33.2 23.8 Z" fill="#0A4AB4" stroke="#fff" stroke-width="2"/><rect x="10" y="23.8" width="26" height="2.2" fill="#fff"/><path d="M14 23.8 A5.5 5.5 0 0 1 13.2 12.8 A9.8 9.8 0 0 1 31.8 11.5 A6.1 6.1 0 0 1 33.2 23.8 Z" fill="#0A4AB4"/></svg>
<div class="t" style="left:2707.2px;width:270px;text-align:center;top:1714.4px;font-size:31px;line-height:31px;color:#1F1F1F;font-weight:400;">Add</div>
<div class="t" style="left:2768.0px;top:1755.2px;font-size:31px;line-height:31px;color:#1F1F1F;font-weight:400;">account...</div>
</div></div>
</body></html>
